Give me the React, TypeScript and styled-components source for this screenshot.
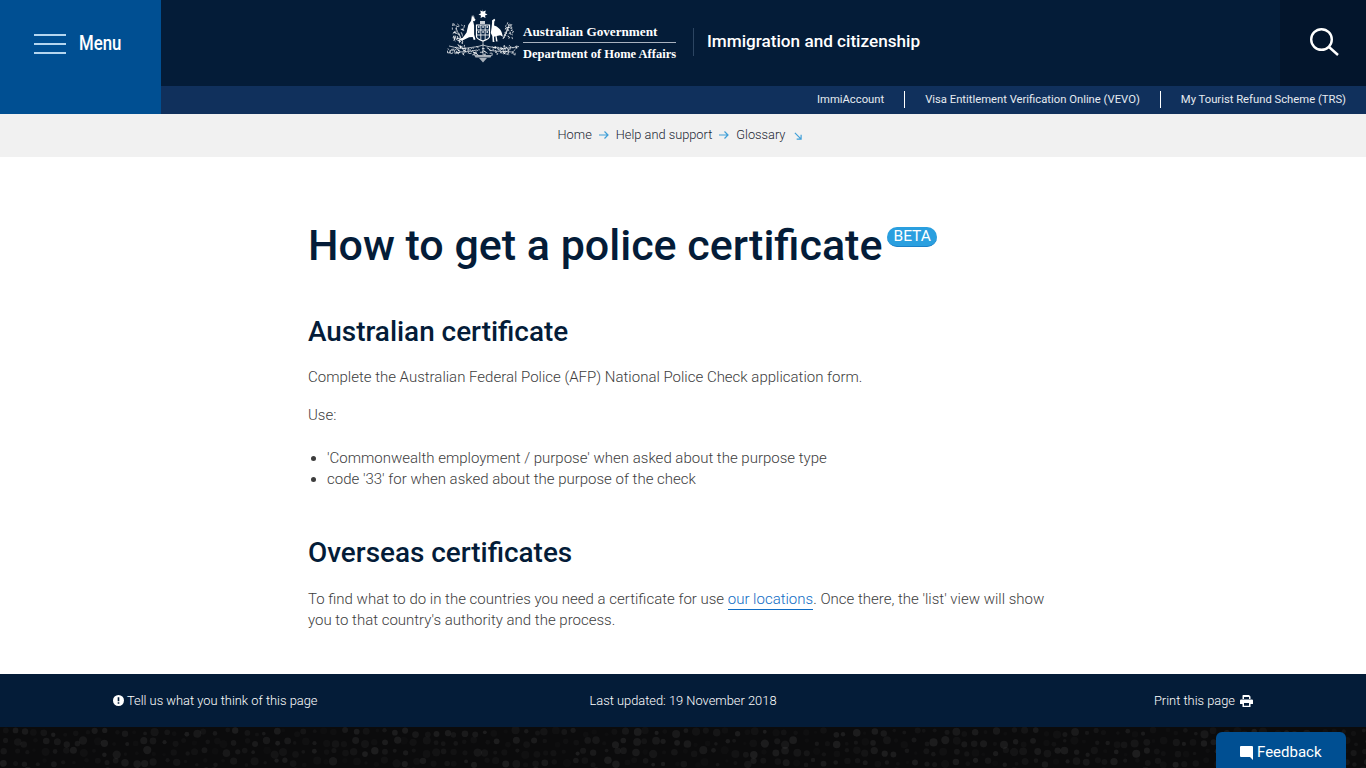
import React from 'react';
import styled, { createGlobalStyle } from 'styled-components';

const Global = createGlobalStyle`
  html, body { margin: 0; padding: 0; background: #fff; }
  body { font-family: Roboto, "Liberation Sans", sans-serif; font-weight: 300; color: #3d3d3d; overflow: hidden; }
  * { box-sizing: border-box; }
`;

const Page = styled.div`
  height: 768px;
  overflow: hidden;
  display: flex;
  flex-direction: column;
`;
const Header = styled.header`
  display: flex;
  height: 114px;
  background: #04203f;
`;
const MenuButton = styled.div`
  width: 161px;
  flex: none;
  background: #004f92;
  display: flex;
  align-items: flex-start;
  padding: 34px 0 0 34px;
  gap: 13px;
`;
const Burger = styled.div`
  width: 32px;
  height: 20px;
  display: flex;
  flex-direction: column;
  justify-content: space-between;
  span { display: block; height: 2px; background: #b5d6ef; }
`;
const MenuText = styled.span`
  color: #fff;
  font-family: Roboto, sans-serif;
  font-size: 20px;
  line-height: 20px;
  font-weight: 500;
  margin-top: -1px;
  transform: scaleX(0.84);
  transform-origin: left center;
`;
const HeaderRight = styled.div`
  flex: 1;
  display: flex;
  flex-direction: column;
`;
const TopBar = styled.div`
  height: 86px;
  display: flex;
  background: #041c38;
`;
const Brand = styled.div`
  flex: 1;
  display: flex;
  align-items: flex-start;
  padding: 9px 0 0 286px;
`;
const BrandText = styled.div`
  font-family: "Liberation Serif", serif;
  font-weight: 700;
  color: #fff;
  white-space: nowrap;
  line-height: 15px;
  margin: 15px 0 0 4px;
  width: 153px;
`;
const BrandTop = styled.div`
  font-size: 13.2px;
  padding-bottom: 3px;
  border-bottom: 1px solid #a9b2bf;
  margin-bottom: 4px;
`;
const BrandBottom = styled.div`
  font-size: 12.5px;
`;
const Divider = styled.div`
  width: 1px;
  height: 28px;
  background: #2c4562;
  margin: 19px 13px 0 17px;
`;
const SiteName = styled.div`
  color: #fff;
  font-size: 17.15px;
  line-height: 20px;
  font-weight: 500;
  margin-top: 22px;
`;
const SearchBox = styled.div`
  width: 86px;
  flex: none;
  background: #03152c;
  display: flex;
  justify-content: center;
  padding-top: 27px;
`;
const SubBar = styled.nav`
  height: 28px;
  background: #10305c;
  display: flex;
  justify-content: flex-end;
  align-items: center;
  padding: 0 20px 2px 0;
`;
const SubLink = styled.a`
  color: #e6ebf1;
  font-size: 11.25px;
  font-weight: 400;
  line-height: 17px;
  & + & { margin-left: 20px; padding-left: 20px; border-left: 1px solid #fff; }
`;
const Breadcrumb = styled.div`
  height: 43px;
  background: #f1f1f1;
  display: flex;
  justify-content: center;
  align-items: center;
  padding: 0 6px 2px 0;
  gap: 7px;
  font-size: 12.8px;
`;
const Crumb = styled.span`
  color: #1a2531;
`;
const Main = styled.main`
  flex: 1;
  padding: 0 0 0 308px;
  width: 1058px;
`;
const Title = styled.h1`
  font-size: 43px;
  line-height: 52px;
  font-weight: 500;
  color: #041c38;
  margin: 62px 0 0;
  display: flex;
  align-items: flex-start;
`;
const Beta = styled.span`
  font-size: 15.5px;
  font-weight: 400;
  line-height: 18px;
  height: 20px;
  border-radius: 10px;
  background: #2a9fdf;
  border-bottom: 1px solid #1a80c8;
  color: #fff;
  padding: 0 6px;
  margin: 8px 0 0 5px;
`;
const H2 = styled.h2<{ $top: number }>`
  font-size: 27.9px;
  line-height: 32px;
  font-weight: 500;
  color: #041c38;
  margin: ${(p) => p.$top}px 0 0;
`;
const Para = styled.p<{ $top: number }>`
  font-size: 15px;
  line-height: 21px;
  margin: ${(p) => p.$top}px 0 0;
`;
const List = styled.ul`
  margin: 22px 0 0;
  padding: 0 0 0 19px;
  font-size: 15px;
  line-height: 21px;
`;
const Link = styled.a`
  color: #0f6cc4;
  border-bottom: 1px solid #0f6cc4;
  padding-bottom: 1px;
`;
const FooterBar = styled.footer`
  height: 53px;
  flex: none;
  background: #041c38;
  color: #fff;
  display: grid;
  grid-template-columns: 1fr auto 1fr;
  align-items: center;
  padding: 0 113px;
  font-size: 12.87px;
`;
const FootItem = styled.div<{ $end?: boolean }>`
  display: flex;
  align-items: center;
  gap: 3px;
  justify-content: ${(p) => (p.$end ? 'flex-end' : 'flex-start')};
`;
const Art = styled.div`
  height: 41px;
  flex: none;
  background: #0b0b0c;
  position: relative;
  overflow: hidden;
  svg { display: block; }
`;
const FeedbackBtn = styled.div`
  position: absolute;
  right: 20px;
  top: 5px;
  width: 130px;
  height: 40px;
  background: #004f92;
  border-radius: 6px 6px 0 0;
  color: #fff;
  font-size: 15px;
  font-weight: 400;
  display: flex;
  align-items: flex-start;
  padding: 11px 0 0 24px;
  gap: 4px;
  line-height: 19px;
`;

const dots = (() => {
  const out: { x: number; y: number; r: number; o: number }[] = [];
  let seed = 7;
  const rnd = () => { seed = (seed * 9301 + 49297) % 233280; return seed / 233280; };
  for (let y = 3; y < 44; y += 10) {
    for (let x = 3; x < 1366; x += 10) {
      const v = rnd();
      out.push({ x: x + rnd() * 5, y: y + rnd() * 5, r: 1.8 + v * 2.4, o: 0.015 + rnd() * 0.06 });
    }
  }
  return out;
})();

const leaves = (() => {
  const out: string[] = [];
  let seed = 31;
  const rnd = () => { seed = (seed * 9301 + 49297) % 233280; return seed / 233280; };
  const cluster = (cx: number, cy: number, w: number, h: number, n: number) => {
    for (let i = 0; i < n; i++) {
      const x = cx + (rnd() - 0.5) * w;
      const y = cy + (rnd() - 0.5) * h;
      const a = rnd() * Math.PI * 2;
      const l = 1 + rnd() * 2;
      out.push(`M${x.toFixed(1)} ${y.toFixed(1)}l${(Math.cos(a) * l).toFixed(1)} ${(Math.sin(a) * l).toFixed(1)}`);
    }
  };
  cluster(11, 25, 12, 17, 48);
  cluster(61, 21, 9, 15, 36);
  cluster(14, 41, 28, 8, 56);
  cluster(57, 41, 28, 8, 56);
  cluster(36, 42, 18, 7, 22);
  return out.join('');
})();

const Crest = () => (
  <svg width="72" height="54" viewBox="0 0 72 54" fill="none">
    <path d="M35 0l1.200 2.400 2.600-.8-.7 2.600 2.400 1.200-2.500 1 .5 2.600-2.500-1.200-2.400 1.200.4-2.600-2.500-1 2.400-1.200-.7-2.600 2.600.8z" fill="#fff" />
    <path d="M25 6l1.200 2.500.7-2.800.5 3.500 1.200 1.600-1.200 1.400-1.300-.2 1 4.500v9l1.400 5-1.800.6-1-3.200-3.600.4-5.600 2.800-7 1 6.500-3.600 3.600-5 1.700-7.500 2.800-4.200z" fill="#fff" />
    <path d="M45 11.500l2.300-1.700 1 1.200-1 1.600-.2 4c3.400 1 7.300 4 8 8.200l.8 3-2.600-1.600-3.700.9.900 5h1.300l-2.800.5-.6-5.400-1.400.5.200 4.800 1.300.2-2.800.3-.4-6-1.500-3 .8-5.600.5-4.800z" fill="#fff" />
    <path d="M33 12h5v3h-5z" fill="#fff" opacity=".8" />
    <path d="M29.500 16h13v11.500c0 2.500-3.500 3.500-6.500 4.500-3-1-6.500-2-6.500-4.500z" fill="#0b2747" stroke="#fff" strokeWidth="1.200" />
    <path d="M33.800 16v14.500M38.200 16v15M29.500 21h13M29.500 26h13" stroke="#fff" strokeWidth=".8" />
    <path d="M31 18h1.500M35.300 18h1.500M39.500 18h1.500M31 23h1.500M35.300 23h1.500M39.500 23h1.500" stroke="#fff" strokeWidth="1.400" />
    <path d="M36 32v14M36 36c-5 2-10 2-15 3s-11 0-19-2M36 36c5 2 10 2 15 3s11 0 19-1M30 41c-7 2-14 1-23 3M42 41c7 2 14 1 23 2M9 19c2 5 4 9 7 14M62 15c-1 6-3 10-6 15" stroke="#fff" strokeWidth=".8" opacity=".85" />
    <path d={leaves} stroke="#fff" strokeWidth=".9" opacity=".8" />
    <path d="M27 46h18l-1.500 2.500h-15zM32 49h8l-4 4.500z" fill="#fff" opacity=".65" />
  </svg>
);

export default function App() {
  return (
    <Page>
      <Global />
      <Header>
        <MenuButton>
          <Burger><span /><span /><span /></Burger>
          <MenuText>Menu</MenuText>
        </MenuButton>
        <HeaderRight>
          <TopBar>
            <Brand>
              <Crest />
              <BrandText>
                <BrandTop>Australian Government</BrandTop>
                <BrandBottom>Department of Home Affairs</BrandBottom>
              </BrandText>
              <Divider />
              <SiteName>Immigration and citizenship</SiteName>
            </Brand>
            <SearchBox>
              <svg width="32" height="30" viewBox="0 0 32 30" fill="none" stroke="#fff">
                <circle cx="14.500" cy="12.500" r="10.300" strokeWidth="2.400" />
                <path d="M22 20l9 8" strokeWidth="2.400" />
              </svg>
            </SearchBox>
          </TopBar>
          <SubBar>
            <SubLink>ImmiAccount</SubLink>
            <SubLink>Visa Entitlement Verification Online (VEVO)</SubLink>
            <SubLink>My Tourist Refund Scheme (TRS)</SubLink>
          </SubBar>
        </HeaderRight>
      </Header>
      <Breadcrumb>
        <Crumb>Home</Crumb>
        <svg width="10" height="10" viewBox="0 0 10 10" fill="none" stroke="#3f9fd8" strokeWidth="1.200"><path d="M0 5h9M5.500 1.500L9 5 5.500 8.500" /></svg>
        <Crumb>Help and support</Crumb>
        <svg width="10" height="10" viewBox="0 0 10 10" fill="none" stroke="#3f9fd8" strokeWidth="1.200"><path d="M0 5h9M5.500 1.500L9 5 5.500 8.500" /></svg>
        <Crumb>Glossary</Crumb>
        <svg width="8" height="8" viewBox="0 0 9 9" fill="none" stroke="#3f9fd8" strokeWidth="1.300" style={{ marginLeft: 2, marginTop: 3 }}><path d="M1 1l7 7M8 3v5H3" /></svg>
      </Breadcrumb>
      <Main>
        <Title>How to get a police certificate<Beta>BETA</Beta></Title>
        <H2 $top={45}>Australian certificate</H2>
        <Para $top={19}>Complete the Australian Federal Police (AFP) National Police Check application form.</Para>
        <Para $top={17}>Use:</Para>
        <List>
          <li>'Commonwealth employment / purpose' when asked about the purpose type</li>
          <li>code '33' for when asked about the purpose of the check</li>
        </List>
        <H2 $top={47}>Overseas certificates</H2>
        <Para $top={20}>
          To find what to do in the countries you need a certificate for use <Link>our locations</Link>. Once there, the 'list' view will show you to that country's authority and the process.
        </Para>
      </Main>
      <FooterBar>
        <FootItem>
          <svg width="11" height="11" viewBox="0 0 12 12"><circle cx="6" cy="6" r="6" fill="#fff" /><path d="M6 2.500v4.200M6 8v1.500" stroke="#041c38" strokeWidth="1.800" /></svg>
          Tell us what you think of this page
        </FootItem>
        <FootItem>Last updated: 19 November 2018</FootItem>
        <FootItem $end>
          Print this page
          <svg width="13" height="12" viewBox="0 0 13 12" style={{ marginLeft: 2 }} fill="#fff"><path d="M3 0h6l1.500 1.500V4H9V2H4v2H2.500V.5zM1 4.500h11a1 1 0 0 1 1 1V9h-2.500v3h-8V9H0V5.500a1 1 0 0 1 1-1zM4 8v2.700h5V8z" /></svg>
        </FootItem>
      </FooterBar>
      <Art>
        <svg width="1366" height="41">
          {dots.map((d, i) => <circle key={i} cx={d.x} cy={d.y} r={d.r} fill="#fff" opacity={d.o} />)}
        </svg>
        <FeedbackBtn>
          <svg width="13" height="14" viewBox="0 0 13 14" style={{ marginTop: 3 }} fill="#fff"><path d="M1 0h11a1 1 0 0 1 1 1v13l-3-3H1a1 1 0 0 1-1-1V1a1 1 0 0 1 1-1z" /></svg>
          Feedback
        </FeedbackBtn>
      </Art>
    </Page>
  );
}
